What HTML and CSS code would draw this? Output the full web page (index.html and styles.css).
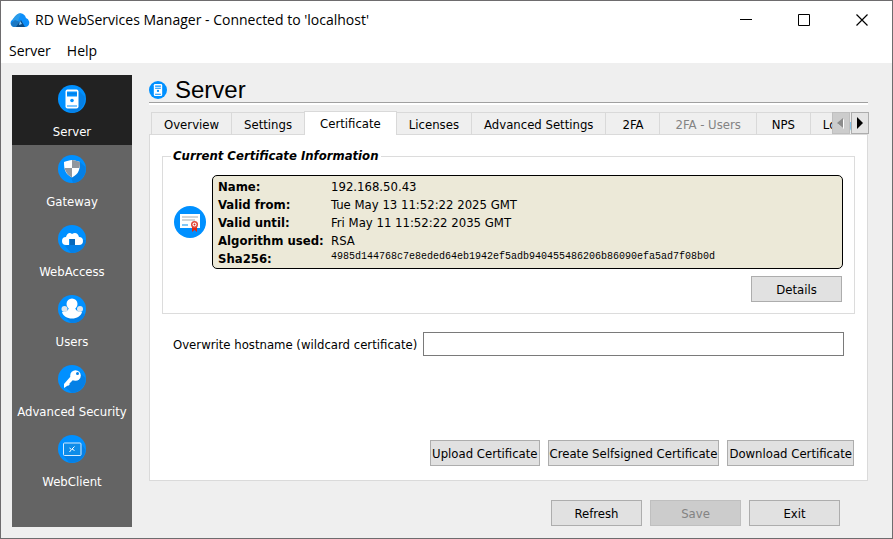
FILE: index.html
```html
<!DOCTYPE html>
<html lang="en">
<head>
  <meta charset="utf-8">
  <title>RD WebServices Manager</title>
  <link rel="stylesheet" href="styles.css">
</head>
<body>
  <div class="window">
    <header class="titlebar">
      <svg class="logo" viewBox="0 0 20 16" width="20" height="16">
        <path d="M4 15a4 4 0 0 1-2-7L8 2a5.500 5.500 0 0 1 8 4 5 5 0 0 1 2 8l-2 1z" fill="#0d8ffb"/>
        <path d="M3 7C5 4 7 1 11 1.500L8 9 3 10z" fill="#2b9cea"/>
        <path d="M1 11l4-3 5 2-2 5H4a4 4 0 0 1-3-4z" fill="#1b78c4"/>
        <path d="M11 8l4 7H6z" fill="#0c4b86"/>
        <path d="M10 9l2 3-3 1z" fill="#8ccdf8"/>
      </svg>
      <span class="title">RD WebServices Manager - Connected to 'localhost'</span>
      <div class="win_btns">
        <button aria-label="Minimize"><svg width="12" height="12"><path d="M0 5.500h12" stroke="#000"/></svg></button>
        <button aria-label="Maximize"><svg width="12" height="12"><path d="M.5.5h11v11H.5z" fill="none" stroke="#000"/></svg></button>
        <button aria-label="Close"><svg width="12" height="12"><path d="M.5.5l11 11M11.500.5L.5 11.500" stroke="#000" stroke-width="1.200"/></svg></button>
      </div>
    </header>
    <nav class="menubar">
      <button>Server</button>
      <button>Help</button>
    </nav>

    <div class="content">
      <nav class="sidebar">
        <a href="#server" class="side_item active">
          <svg viewBox="0 0 28 28" width="28" height="28">
            <circle cx="14" cy="14" r="14" fill="#0090ff"/>
            <path d="M20 5l6.500 6.500A14 14 0 0 1 13 28l-5-5z" fill="#0580e6"/>
            <rect x="7.500" y="4.500" width="13" height="19" rx="2" fill="#fff"/>
            <path d="M9 6.500h10v5H9zM9 20.500h10v1H9z" fill="#0090ff"/>
            <path d="M9 8.500h10v.7H9z" fill="#0670c8"/>
            <circle cx="14" cy="15.500" r="1.800" fill="#0090ff"/>
          </svg>
          <span>Server</span>
        </a>
        <a href="#gateway" class="side_item">
          <svg viewBox="0 0 28 28" width="28" height="28">
            <circle cx="14" cy="14" r="14" fill="#0090ff"/>
            <path d="M22 7l5.500 5A14 14 0 0 1 15 28l-2-6z" fill="#0580e6"/>
            <path d="M14 5c-2.500 0-5 1-8 2 0 7 1 12 8 15.500C21 19 22 14 22 7c-3-1-5.500-2-8-2z" fill="#fff"/>
            <path d="M14 5c2.500 0 5 1 8 2 0 2 0 4-.6 6H14z" fill="#91979e"/>
            <path d="M6.600 13H14v9.500C9.500 20 7.500 17 6.600 13z" fill="#91979e"/>
          </svg>
          <span>Gateway</span>
        </a>
        <a href="#webaccess" class="side_item">
          <svg viewBox="0 0 28 28" width="28" height="28">
            <circle cx="14" cy="14" r="14" fill="#0090ff"/>
            <path d="M23 15h5A14 14 0 0 1 13 28l-6-7z" fill="#0580e6"/>
            <path d="M8 20a4 4 0 0 1 0-8c1-4 4-5 6-3 3-2 6-1 7 3a4 4 0 0 1 0 8h-4v-6h-6v6z" fill="#fff"/>
            <path d="M12 14h5v6h-5z" fill="#0668bb"/>
          </svg>
          <span>WebAccess</span>
        </a>
        <a href="#users" class="side_item">
          <svg viewBox="0 0 28 28" width="28" height="28">
            <circle cx="14" cy="14" r="14" fill="#0090ff"/>
            <path d="M24 17l3 3a14 14 0 0 1-14 8l-6-6z" fill="#0580e6"/>
            <path d="M4 17c3 0 6-1 7-4h6c1 3 4 4 7 4-1 4-5 6.500-10 6.500S5 21 4 17z" fill="#fff"/>
            <circle cx="6.500" cy="14" r="3" fill="#dfe6ec"/>
            <circle cx="22" cy="14" r="3" fill="#dfe6ec"/>
            <ellipse cx="14" cy="9" rx="5.500" ry="5.500" fill="#fff"/>
          </svg>
          <span>Users</span>
        </a>
        <a href="#security" class="side_item">
          <svg viewBox="0 0 28 28" width="28" height="28">
            <circle cx="14" cy="14" r="14" fill="#0090ff"/>
            <path d="M21 7l6.500 6A14 14 0 0 1 14 28l-7-6z" fill="#0580e6"/>
            <circle cx="17.500" cy="10.500" r="5.300" fill="#fff"/>
            <path d="M13 11l3 3-7 7-3 2v-4z" fill="#fff"/>
            <path d="M10 18l2 1-2 2-1-1z" fill="#fff"/>
            <circle cx="19.500" cy="8.500" r="1.500" fill="#0580e6"/>
          </svg>
          <span>Advanced Security</span>
        </a>
        <a href="#webclient" class="side_item">
          <svg viewBox="0 0 28 28" width="28" height="28">
            <circle cx="14" cy="14" r="14" fill="#0090ff"/>
            <path d="M5 20h18V8l4.500 7A14 14 0 0 1 11 27.500z" fill="#0580e6"/>
            <rect x="5.500" y="8" width="17.500" height="12.500" rx="1" fill="#0e8ce9" stroke="#d5ecff"/>
            <path d="M11.500 13l2 1.500-2 2.500M16.500 11.500L14 14l2.500 1.500" fill="none" stroke="#fff"/>
          </svg>
          <span>WebClient</span>
        </a>
      </nav>

      <main class="main">
        <h1>
          <svg viewBox="0 0 28 28" width="18" height="18">
            <circle cx="14" cy="14" r="14" fill="#0090ff"/>
            <rect x="7.500" y="4.500" width="13" height="19" rx="2" fill="#fff"/>
            <path d="M9.500 7h9v2h-9zM9.500 10.500h9V12h-9zM9.500 20h9v1.500h-9z" fill="#0090ff"/>
            <circle cx="14" cy="15.500" r="1.800" fill="#0090ff"/>
          </svg>
          Server
        </h1>
        <div class="tabs">
          <div class="tab_list" role="tablist">
            <button role="tab">Overview</button>
            <button role="tab">Settings</button>
            <button role="tab" class="active" aria-selected="true">Certificate</button>
            <button role="tab">Licenses</button>
            <button role="tab">Advanced Settings</button>
            <button role="tab">2FA</button>
            <button role="tab" disabled>2FA - Users</button>
            <button role="tab">NPS</button>
            <button role="tab">Logging</button>
          </div>
          <div class="tab_scroll">
            <button aria-label="Scroll left" disabled><svg width="8" height="12"><path d="M7 2v10L1 7z" fill="#fff"/><path d="M6 1v10L0 6z" fill="#8c8c8c"/></svg></button>
            <button aria-label="Scroll right"><svg width="8" height="12"><path d="M1 0v12l6-6z"/></svg></button>
          </div>
        </div>
        <section class="panel">
          <fieldset>
            <legend>Current Certificate Information</legend>
            <div class="cert">
              <svg viewBox="0 0 32 32" width="32" height="32">
                <circle cx="16" cy="16" r="16" fill="#0090ff"/>
                <rect x="6" y="8" width="20" height="14" fill="#fff"/>
                <path d="M8 11h16M8 14h13" stroke="#c4c7ca" stroke-width="1.500"/>
                <path d="M8 19h6" stroke="#56b4f5" stroke-width="1.500"/>
                <path d="M18 20h5v6l-2.500-2-2.500 2z" fill="#d9291c"/>
                <circle cx="20.500" cy="18.500" r="3.500" fill="#e34a3b"/>
                <circle cx="20.500" cy="18.500" r="2" fill="#fff"/>
                <circle cx="20.500" cy="18.500" r="1" fill="#d9291c"/>
              </svg>
              <table class="cert_info">
                <tbody>
                  <tr><th scope="row">Name:</th><td>192.168.50.43</td></tr>
                  <tr><th scope="row">Valid from:</th><td>Tue May 13 11:52:22 2025 GMT</td></tr>
                  <tr><th scope="row">Valid until:</th><td>Fri May 11 11:52:22 2035 GMT</td></tr>
                  <tr><th scope="row">Algorithm used:</th><td>RSA</td></tr>
                  <tr><th scope="row">Sha256:</th><td class="hash">4985d144768c7e8eded64eb1942ef5adb940455486206b86090efa5ad7f08b0d</td></tr>
                </tbody>
              </table>
            </div>
            <div class="btn_row">
              <button class="btn">Details</button>
            </div>
          </fieldset>
          <div class="host_row">
            <label for="hostname">Overwrite hostname (wildcard certificate)</label>
            <input type="text" id="hostname">
          </div>
          <div class="btn_row cert_btns">
            <button class="btn">Upload Certificate</button>
            <button class="btn">Create Selfsigned Certificate</button>
            <button class="btn">Download Certificate</button>
          </div>
        </section>
        <footer class="btn_row">
          <button class="btn">Refresh</button>
          <button class="btn" disabled>Save</button>
          <button class="btn">Exit</button>
        </footer>
      </main>
    </div>
  </div>
</body>
</html>
```
FILE: styles.css
```css
* {
  box-sizing: border-box;
}
body {
  margin: 0;
  font-family: "DejaVu Sans Condensed", "Noto Sans", sans-serif;
  font-size: 13px;
  line-height: 18px;
  color: #000;
}
button, input {
  font: inherit;
  color: inherit;
}
button {
  margin: 0;
  padding: 0;
  border: 0;
  background: none;
  white-space: nowrap;
}
svg {
  display: block;
  flex: none;
}
.window {
  display: flex;
  flex-direction: column;
  min-height: 100vh;
  border: 1px solid #6e6c6e;
  background-color: #efefef;
}
.titlebar {
  display: flex;
  align-items: center;
  height: 38px;
  padding-left: 9px;
  background-color: #fff;
  font-family: "Open Sans", sans-serif;
  font-size: 14px;
}
.title {
  margin-left: 5px;
}
.win_btns {
  display: flex;
  margin-left: auto;
  padding-right: 1px;
}
.win_btns button {
  display: flex;
  align-items: center;
  justify-content: center;
  width: 58px;
  height: 36px;
}
.menubar {
  display: flex;
  gap: 16px;
  height: 24px;
  padding-left: 8px;
  background-color: #fff;
  font-family: "Open Sans", sans-serif;
  font-size: 14px;
}
.content {
  display: flex;
  flex: 1;
  gap: 17px;
  padding: 12px 24px 11px 11px;
}
.sidebar {
  width: 120px;
  flex: none;
  background-color: #646464;
}
.side_item {
  display: flex;
  flex-direction: column;
  align-items: center;
  gap: 10px;
  height: 70px;
  padding-top: 10px;
  color: #fff;
  text-decoration: none;
}
.side_item.active {
  background-color: #222;
}
.main {
  display: flex;
  flex: 1;
  flex-direction: column;
  min-width: 0;
}
h1 {
  display: flex;
  align-items: center;
  gap: 8px;
  height: 28px;
  margin: 0 0 8px;
  padding-top: 2px;
  border-bottom: 1px solid #a0a0a0;
  box-shadow: 0 2px #fff;
  font-family: "Liberation Sans", sans-serif;
  font-size: 24px;
  font-weight: normal;
}
.tabs {
  display: flex;
  position: relative;
  z-index: 1;
  height: 24px;
}
.tab_list {
  display: flex;
  flex: 1;
  align-items: flex-end;
  min-width: 0;
  padding-left: 2px;
  overflow: hidden;
}
.tab_list button {
  flex: none;
  min-width: 54px;
  height: 23px;
  padding: 2px 12px 0;
  border: 1px solid #d9d9d9;
  border-width: 1px 0 0 1px;
}
.tab_list .active {
  position: relative;
  height: 24px;
  padding: 0 15px;
  border-right-width: 1px;
  background-color: #fff;
}
.tab_list .active + button {
  border-left: 0;
}
.tab_list button:disabled {
  padding: 2px 15px 0;
  color: #838383;
}
.tab_scroll {
  display: flex;
  position: absolute;
  right: -1px;
  top: 1px;
  gap: 1px;
}
.tab_scroll button {
  display: flex;
  align-items: center;
  justify-content: center;
  width: 18px;
  height: 22px;
  border: 1px solid #adadad;
  background-color: #e4e4e4;
}
.tab_scroll button:disabled {
  border-color: #bfbfbf;
  background-color: #ccc;
}
.panel {
  display: flex;
  flex: 1;
  flex-direction: column;
  margin-top: -1px;
  padding: 12px 12px 14px;
  border: 1px solid #dadada;
  background-color: #fff;
}
fieldset {
  margin: 0;
  padding: 10px 11px 11px;
  border: 1px solid #dcdcdc;
}
legend {
  padding: 0 2px;
  margin-left: -3px;
  font-weight: bold;
  font-style: italic;
}
.cert {
  display: flex;
  align-items: center;
  gap: 6px;
}
.cert_info {
  display: block;
  flex: 1;
  padding: 2px 5px 0;
  border: 1px solid #000;
  border-radius: 5px;
  border-spacing: 0;
  background-color: #ece9d8;
}
.cert_info th {
  width: 113px;
  padding: 0;
  text-align: left;
  white-space: nowrap;
}
.cert_info td {
  padding: 0;
}
.cert_info .hash {
  font-family: "Liberation Mono", monospace;
  font-size: 10px;
  line-height: 14px;
  vertical-align: top;
}
.btn_row {
  display: flex;
  justify-content: flex-end;
  gap: 8px;
}
.cert + .btn_row {
  margin: 7px 1px 0 0;
}
.btn {
  min-width: 91px;
  height: 26px;
  padding: 2px 1px 0;
  border: 1px solid #adadad;
  background-color: #e1e1e1;
}
.btn:disabled {
  border-color: #bfbfbf;
  background-color: #ccc;
  color: #838383;
}
.host_row {
  display: flex;
  align-items: center;
  gap: 6px;
  margin: 18px 11px 0;
}
.host_row label {
  padding-top: 2px;
}
.host_row input {
  flex: 1;
  min-width: 0;
  height: 24px;
  border: 1px solid #7a7a7a;
  background-color: #fff;
}
.cert_btns {
  margin: auto 1px 0 0;
}
footer {
  margin: 19px 28px 1px;
}
```
